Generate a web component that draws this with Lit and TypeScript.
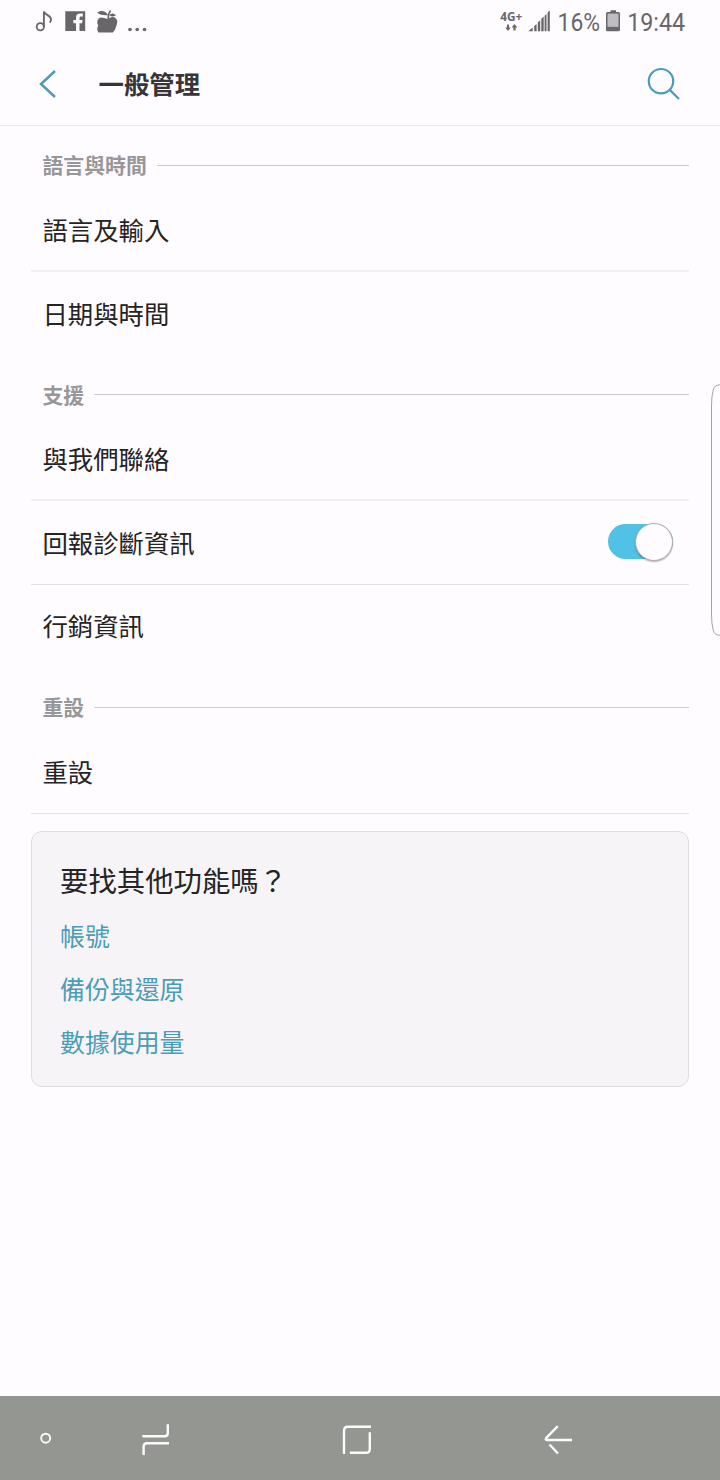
import { LitElement, html, css } from "lit";
import { customElement, property } from "lit/decorators.js";

interface Row {
  label: string;
  toggle?: boolean;
  rule?: "soft" | "thin";
}

interface Section {
  title: string;
  rows: Row[];
}

const SECTIONS: Section[] = [
  {
    title: "語言與時間",
    rows: [{ label: "語言及輸入", rule: "soft" }, { label: "日期與時間" }],
  },
  {
    title: "支援",
    rows: [
      { label: "與我們聯絡", rule: "soft" },
      { label: "回報診斷資訊", toggle: true, rule: "thin" },
      { label: "行銷資訊" },
    ],
  },
  { title: "重設", rows: [{ label: "重設", rule: "thin" }] },
];

const LINKS = ["帳號", "備份與還原", "數據使用量"];

@customElement("status-bar")
class StatusBar extends LitElement {
  static styles = css`
    :host { display: block; height: 44px; }
    svg { display: block; width: 720px; height: 44px; }
    .txt { font-family: Roboto, sans-serif; fill: #69666a; }
    .clock { font-size: 26.5px; }
    .net { font-family: "Open Sans", sans-serif; font-weight: 700; font-size: 12px; }
  `;
  render() {
    return html`<svg viewBox="0 0 720 44" fill="#69666a">
      <g fill="none" stroke="#69666a">
        <circle cx="40.3" cy="26.8" r="3.6" stroke-width="1.8" />
        <path d="M43.9 27V11.6C45 15.5 50.6 15 51 19.2C51.1 20.5 50.7 21.5 49.8 22.5" stroke-width="1.9" />
      </g>
      <path fill-rule="evenodd" d="M65.3 11.3H85.2V31H79.5V23.3H82.1L82.6 20.1H79.5V18.2C79.5 17 80 16.5 81.2 16.5H82.8V13.6H80.3C77.5 13.6 76 15 76 17.7V20.1H73.4V23.3H76V31H65.3Z" />
      <path d="M99 18.2C102 16.6 104.5 18.6 107 18.8C109.5 18.8 111 16.4 114 17.2C117 18.2 118 21.5 116.8 24.2C116 27 115.3 30 113 32.4H98.4C96.9 30.4 97 28 98.2 25.6C96.8 23.2 96.9 20 99 18.2Z" />
      <path d="M97.2 12.6C101 9.6 105.8 11 108.3 15.2C104 15.2 100.5 15.6 97.2 12.6ZM109.6 15.6C110.6 13 113.2 12.9 116 15.2C113.6 16.8 111.4 16.8 109.6 15.6Z" />
      <path d="M108.5 19Q107.8 14 110.6 10.4" fill="none" stroke="#69666a" stroke-width="1.7" />
      <circle cx="130" cy="29.5" r="1.8" /><circle cx="137.2" cy="29.5" r="1.8" /><circle cx="144.5" cy="29.5" r="1.8" />
      <text class="txt net" x="500.3" y="20.6" textLength="22" lengthAdjust="spacingAndGlyphs">4G+</text>
      <path d="M507 24.5H509V27.5H510.8L508 31L505.2 27.5H507ZM513.4 30.5V27.5H511.6L514.5 24L517.4 27.5H515.6V30.5Z" />
      <path d="M528.3 31.2L532.7 27.4V31.2ZM534.2 26L536.6 24V31.2H534.2ZM537.8 22.4L540.2 20.3V31.2H537.8ZM541.3 18.7L543.7 16.6V31.2H541.3ZM544.6 15.7L546.5 14V31.2H544.6ZM547.6 12.5L549.8 10.5V31.2H547.6Z" />
      <text class="txt clock" x="557.6" y="31" textLength="42.5" lengthAdjust="spacingAndGlyphs">16%</text>
      <path d="M610.5 10.2H616V12H618.5Q620 12 620 13.5V29.7Q620 31.2 618.5 31.2H607.5Q606 31.2 606 29.7V13.5Q606 12 607.5 12H610.5Z" />
      <rect x="607.5" y="13.6" width="11" height="13.2" fill="#c0bdc2" />
      <text class="txt clock" x="627.2" y="31" textLength="58" lengthAdjust="spacingAndGlyphs">19:44</text>
    </svg>`;
  }
}

@customElement("setting-row")
class SettingRow extends LitElement {
  static styles = css`
    :host { display: block; }
    .row {
      box-sizing: border-box;
      display: flex;
      align-items: center;
      justify-content: space-between;
      height: 83.5px;
      padding: 0 16px 1px 11.4px;
      font-size: 25.4px;
      line-height: 36px;
      color: #242325;
      border-bottom: 1px solid transparent;
    }
    .soft { border-bottom: 2px solid #f2eef3; }
    .thin { border-bottom-color: #e4e0e5; }
    .toggle {
      display: flex;
      justify-content: flex-end;
      align-items: center;
      width: 65px;
      height: 35px;
      border-radius: 18px;
      background: #51c2e6;
    }
    .knob {
      flex: none;
      width: 36px;
      height: 36px;
      border-radius: 50%;
      border: 1px solid #b4aeb4;
      background: #fffcff;
      box-shadow: 0 1px 1.5px rgba(0, 0, 0, 0.3);
    }
  `;
  @property({ attribute: false }) row!: Row;
  render() {
    const r = this.row;
    return html`<div class="row ${r.rule ?? ""}">
      <span>${r.label}</span>
      ${r.toggle ? html`<div class="toggle"><div class="knob"></div></div>` : ""}
    </div>`;
  }
}

@customElement("nav-bar")
class NavBar extends LitElement {
  static styles = css`
    :host { display: block; height: 84px; background: #949692; }
    svg { display: block; width: 720px; height: 84px; }
  `;
  render() {
    return html`<svg viewBox="0 1396 720 84" fill="none" stroke="#fdfafd" stroke-width="2.4">
      <circle cx="45.7" cy="1438.2" r="4.5" stroke-width="1.9" />
      <path d="M142.3 1436.3H164.5Q167.8 1436.3 167.8 1433V1424.2M169 1443.3H147Q143.6 1443.3 143.6 1446.6V1455" />
      <path d="M371 1426.8H348Q344 1426.8 344 1430.8V1454M349.8 1452.7H366Q369.8 1452.7 369.8 1448.9V1432.3" />
      <path d="M557.8 1426.2L546 1438.2Q545.2 1440 547.2 1440H572M549.5 1444.5L558 1453.5" />
    </svg>`;
  }
}

@customElement("app-root")
class AppRoot extends LitElement {
  static styles = css`
    :host {
      display: block;
      position: relative;
      width: 720px;
      height: 1480px;
      overflow: hidden;
      background: #fffcff;
      font-family: "Noto Sans CJK TC", "Noto Sans CJK SC", sans-serif;
    }
    .page { display: flex; flex-direction: column; height: 100%; }
    .bar {
      box-sizing: border-box;
      display: flex;
      align-items: center;
      height: 82px;
      padding: 0 40px 2px 38px;
      border-bottom: 1px solid #ebe8ec;
    }
    .back { width: 20px; height: 30px; margin-right: 40.5px; }
    .search { width: 34px; height: 34px; margin-left: auto; }
    .title { margin: 0 0 1px; font-size: 25.4px; line-height: 36px; font-weight: 700; color: #373538; }
    .content { flex: 1; padding: 0 31px; }
    .head {
      box-sizing: border-box;
      display: flex;
      align-items: center;
      gap: 10px;
      height: 62px;
      padding: 18px 0 0 11.4px;
    }
    .first { height: 62.5px; }
    .name { margin-top: -4px; font-size: 20.9px; line-height: 30px; font-weight: 700; color: #979698; }
    .line { flex: 1; height: 1px; margin-top: -2px; background: #cfccd0; }
    .card {
      box-sizing: border-box;
      height: 256px;
      margin-top: 17px;
      padding: 27px 28px;
      border: 1px solid #dfdbe0;
      border-radius: 11px;
      background: #f7f4f7;
    }
    .ask { font-size: 28.4px; line-height: 42px; color: #242325; }
    .links { display: flex; flex-direction: column; gap: 17px; margin-top: 16px; }
    .link { font-size: 24.9px; line-height: 36px; color: #4b9cb8; }
    .edge {
      position: absolute;
      right: 0;
      top: 384px;
      width: 9px;
      height: 252px;
    }
  `;
  render() {
    return html`
      <div class="page">
        <status-bar></status-bar>
        <header class="bar">
          <svg class="back" viewBox="0 0 20 30" fill="none" stroke="#4b9cb8" stroke-width="2.5"><path d="M17 2L3 15L17 28" /></svg>
          <h1 class="title">一般管理</h1>
          <svg class="search" viewBox="0 0 34 34" fill="none" stroke="#4b9cb8" stroke-width="2.2"><circle cx="15" cy="14.2" r="12.2" /><path d="M23.7 22.9L33 32" /></svg>
        </header>
        <main class="content">
          ${SECTIONS.map(
            (s, i) => html`
              <div class="head ${i === 0 ? "first" : ""}"><span class="name">${s.title}</span><span class="line"></span></div>
              ${s.rows.map((r) => html`<setting-row .row=${r}></setting-row>`)}
            `
          )}
          <section class="card">
            <div class="ask">要找其他功能嗎？</div>
            <div class="links">${LINKS.map((l) => html`<div class="link">${l}</div>`)}</div>
          </section>
        </main>
        <nav-bar></nav-bar>
      </div>
      <svg class="edge" viewBox="0 0 9 252" fill="none" stroke="#a5a1a6" stroke-width="1"><path d="M9 .8Q3.5 .8 2.2 6Q.5 12 .5 22V230Q.5 240 2.2 246Q3.5 251.3 9 251.3" /></svg>
    `;
  }
}
